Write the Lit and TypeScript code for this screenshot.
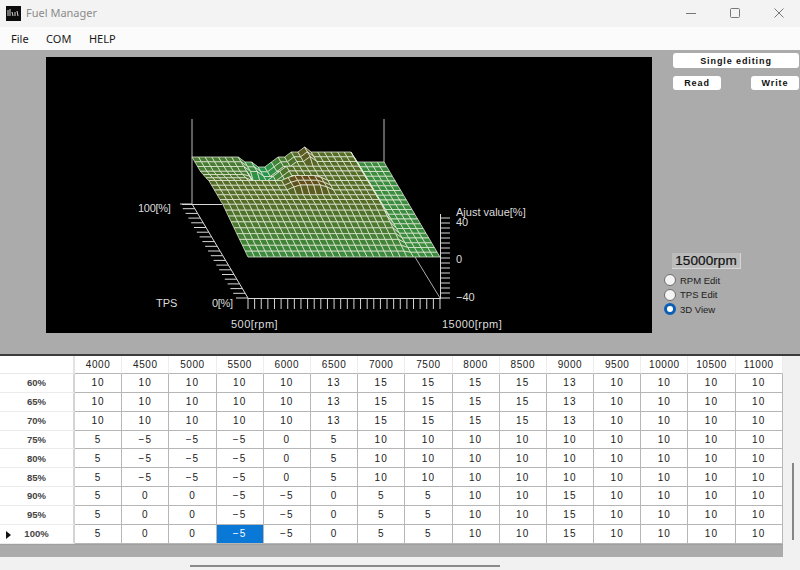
import { LitElement, html, css, svg } from "lit";
import { customElement } from "lit/decorators.js";

const RPMS = [4000, 4500, 5000, 5500, 6000, 6500, 7000, 7500, 8000, 8500, 9000, 9500, 10000, 10500, 11000];
const A = [10, 10, 10, 10, 10, 13, 15, 15, 15, 15, 13, 10, 10, 10, 10];
const B = [5, -5, -5, -5, 0, 5, 10, 10, 10, 10, 10, 10, 10, 10, 10];
const C = [5, 0, 0, -5, -5, 0, 5, 5, 10, 10, 15, 10, 10, 10, 10];
const ROWS: [string, number[]][] = [
  ["60%", A], ["65%", A], ["70%", A],
  ["75%", B], ["80%", B], ["85%", B],
  ["90%", C], ["95%", C], ["100%", C],
];

const NU = 29;
const NV = 20;

function height(i: number, j: number): number {
  // i: rpm index (500 rpm step), j: TPS index (5 % step)
  if (i >= 25) return 0;
  if (j <= 9) return j * 1.1;
  if (j <= 11) return 10;
  const row = j <= 14 ? A : j <= 17 ? B : C;
  if (i < 7) return j <= 14 ? 10 : 5 + (17 - Math.min(j, 17)) * 1.5;
  if (i > 21) return 10;
  return row[i - 7];
}

function px(i: number, j: number): [number, number] {
  const u = i / NU;
  const v = j / NV;
  return [248 - 56 * v + 192 * u, 257 - 95 * v - height(i, j)];
}

function mix(a: number[], b: number[], t: number) {
  return `rgb(${a.map((c, k) => Math.round(c + (b[k] - c) * t)).join(",")})`;
}

function colorFor(z: number): string {
  const low = [36, 150, 78];
  const zero = [58, 140, 62];
  const mid = [84, 108, 38];
  const high = [100, 76, 26];
  if (z < 0) return mix(zero, low, Math.min(1, -z / 5));
  if (z < 10) return mix(zero, mid, z / 10);
  return mix(mid, high, Math.min(1, (z - 10) / 5));
}

function range(n: number) {
  return Array.from({ length: n }, (_, k) => k);
}

@customElement("app-root")
export class AppRoot extends LitElement {
  static styles = css`
    :host {
      display: flex;
      flex-direction: column;
      width: 800px;
      height: 570px;
      overflow: hidden;
      background: #f1f1f1;
      font-family: "Liberation Sans", Arial, sans-serif;
    }
    .title {
      height: 27px;
      background: #f3f3f3;
      display: flex;
      align-items: center;
      padding-left: 6px;
      gap: 5px;
      font-family: "Noto Sans", sans-serif;
      font-size: 11px;
      color: #8b8b8b;
    }
    .logo { display: block; }
    .title .name { flex: 1; position: relative; top: -1px; }
    .ctl { display: block; }
    .ctls { display: flex; align-items: center; height: 27px; margin-right: -1px; }
    .ctlbox { width: 44px; display: flex; justify-content: center; position: relative; top: -1px; }
    .menu {
      height: 23px;
      background: #fbfbfb;
      display: flex;
      align-items: center;
      padding-left: 11px;
      gap: 17.5px;
      font-family: "Noto Sans", sans-serif;
      font-size: 11px;
      color: #1a1a1a;
    }
    .main {
      height: 304px;
      background: #ababab;
      border-bottom: 2px solid #3c3c3c;
      box-sizing: content-box;
      display: flex;
      align-items: flex-start;
    }
    .plot {
      display: block;
      margin: 7px 11px 0 46px;
      width: 606px;
      height: 276px;
      background: #000;
      flex: none;
    }
    .plot text {
      font-family: "Liberation Sans", Arial, sans-serif;
      font-size: 11px;
      fill: #dcdcdc;
    }
    .plot text.wide { letter-spacing: 0.45px; }
    .plot text.tight { letter-spacing: -0.3px; }
    .side {
      width: 137px;
      flex: none;
      display: flex;
      flex-direction: column;
      align-items: flex-start;
    }
    .btn {
      background: #fff;
      border-radius: 3px;
      font-weight: 700;
      font-size: 9px;
      letter-spacing: 0.9px;
      color: #111;
      display: flex;
      align-items: center;
      justify-content: center;
    }
    .single { width: 126px; height: 15px; margin: 3px 0 0 10px; }
    .btnrow { display: flex; justify-content: space-between; width: 126px; margin: 8px 0 0 10px; }
    .rw { width: 48px; height: 14px; }
    .rpm {
      margin: 163px 0 0 9px;
      width: 69px;
      height: 16px;
      background: #bcbcbc;
      border-right: 1px solid #d6d6d6;
      border-bottom: 1px solid #d6d6d6;
      box-sizing: border-box;
      font-size: 13.5px;
      letter-spacing: 0.1px;
      color: #111;
      text-align: center;
      line-height: 16px;
      -webkit-text-stroke: 0.2px #111;
    }
    .radios { display: flex; flex-direction: column; margin: 4px 0 0 1px; }
    .radio {
      height: 14.5px;
      display: flex;
      align-items: center;
      gap: 4px;
      font-size: 9.5px;
      color: #1c1c1c;
    }
    .dot {
      width: 12px;
      height: 12px;
      border-radius: 50%;
      background: #f4f4f4;
      border: 1px solid #6d6d6d;
      box-sizing: border-box;
    }
    .dot.on {
      border: 3.5px solid #0a5fb4;
      background: #fff;
    }
    .lower { flex: 1; display: flex; min-height: 0; }
    .gridwrap { width: 783px; flex: none; display: flex; flex-direction: column; }
    .grid {
      display: grid;
      grid-template-columns: 75px repeat(15, 47.2px);
      grid-template-rows: 18px repeat(9, 18.85px);
      background: #fff;
    }
    .cell {
      display: flex;
      align-items: center;
      justify-content: center;
      box-sizing: border-box;
      background: #fff;
      border-right: 1.5px solid #b6b6b6;
      border-bottom: 1.5px solid #b6b6b6;
      font-size: 10px;
      letter-spacing: 1.1px;
      color: #222;
    }
    .cell.sel { background: #0a78d7; color: #fff; }
    .hd {
      display: flex;
      align-items: center;
      justify-content: center;
      box-sizing: border-box;
      background: #fff;
      border-right: 1px solid #ededed;
      border-bottom: 1.5px solid #b6b6b6;
      font-size: 10px;
      letter-spacing: 0.55px;
      color: #222;
    }
    .hd.corner { border-right: 2px solid #e4e4e4; border-bottom: 1px solid #e8e8e8; }
    .rh {
      position: relative;
      display: flex;
      align-items: center;
      justify-content: center;
      box-sizing: border-box;
      background: #fff;
      border-right: 2px solid #d4d4d4;
      border-bottom: 1px solid #ececec;
      font-size: 9.5px;
      font-weight: 700;
      color: #444;
    }
    .arrow {
      position: absolute;
      left: 6px;
      top: 6px;
      width: 0;
      height: 0;
      border-left: 5px solid #111;
      border-top: 4.5px solid transparent;
      border-bottom: 4.5px solid transparent;
    }
    .greybar { height: 13px; background: #ababab; border-top: 1px solid #9f9f9f; box-sizing: border-box; }
    .hbarzone { flex: 1; padding: 8px 0 0 190px; box-sizing: border-box; }
    .hthumb { width: 310px; height: 2px; background: #8a8a8a; }
    .vzone { flex: 1; padding: 107px 0 0 9px; box-sizing: border-box; }
    .vthumb { width: 2px; height: 77px; background: #868686; }
  `;

  private surface() {
    const quads = [];
    for (let j = NV - 1; j >= 0; j--) {
      for (let i = 0; i < NU; i++) {
        const p = [px(i, j), px(i + 1, j), px(i + 1, j + 1), px(i, j + 1)];
        const z = (height(i, j) + height(i + 1, j) + height(i + 1, j + 1) + height(i, j + 1)) / 4;
        const d = "M" + p.map((q) => `${q[0].toFixed(1)} ${q[1].toFixed(1)}`).join("L") + "Z";
        quads.push(svg`<path d=${d} fill=${colorFor(z)} stroke="#e8eedc" stroke-width="0.75"></path>`);
      }
    }
    return quads;
  }

  private axes() {
    const g = "#d8d8d8";
    return svg`
      <line x1="192" y1="119" x2="192" y2="204" stroke="#bbb"></line>
      <line x1="384" y1="119" x2="384" y2="163" stroke="#bbb"></line>
      <line x1="182" y1="204.5" x2="222" y2="204.5" stroke=${g}></line>
      <line x1="192" y1="204" x2="248" y2="298" stroke=${g}></line>
      <line x1="248" y1="298.5" x2="440" y2="298.5" stroke=${g}></line>
      <line x1="440.5" y1="214" x2="440.5" y2="299" stroke=${g}></line>
      <line x1="415" y1="257" x2="440" y2="298" stroke="#aaa"></line>
      ${range(NV + 1).map((k) => {
        const y = 298 - (k * 94) / NV;
        const x = 248 - (k * 56) / NV;
        return svg`<line x1=${x - 12} y1=${y} x2=${x} y2=${y} stroke=${g} stroke-width="1"></line>`;
      })}
      ${range(NU + 1).map((k) => {
        const x = 248 + (k * 192) / NU;
        return svg`<line x1=${x} y1="298" x2=${x} y2="309" stroke=${g} stroke-width="1"></line>`;
      })}
      ${range(17).map((k) => {
        const y = 298 - k * 5;
        return svg`<line x1="440" y1=${y} x2="450" y2=${y} stroke=${g} stroke-width="1"></line>`;
      })}
      <text class="tight" x="138" y="212">100[%]</text>
      <text x="156" y="307">TPS</text>
      <text class="tight" x="212" y="307">0[%]</text>
      <text class="wide" x="231" y="328">500[rpm]</text>
      <text class="wide" x="442" y="328">15000[rpm]</text>
      <text x="456" y="216">Ajust value[%]</text>
      <text x="456" y="226">40</text>
      <text x="456" y="263">0</text>
      <text x="456" y="301">−40</text>
    `;
  }

  render() {
    return html`
      <div class="title">
        <svg class="logo" width="15" height="15" viewBox="0 0 15 15">
          <rect width="15" height="15" fill="#0b0b0b"></rect>
          <path d="M2 4v6M4 3v7M6 6l1 4M9 6v4M11 5l1 5" stroke="#d5d5d5" stroke-width="1" fill="none"></path>
        </svg>
        <span class="name">Fuel Manager</span>
        <div class="ctls">
          <div class="ctlbox">
            <svg class="ctl" width="12" height="12" viewBox="0 0 12 12"><path d="M1 6.5h10" stroke="#777" fill="none"></path></svg>
          </div>
          <div class="ctlbox">
            <svg class="ctl" width="12" height="12" viewBox="0 0 12 12"><rect x="1.5" y="1.5" width="9" height="9" rx="1" stroke="#777" fill="none"></rect></svg>
          </div>
          <div class="ctlbox">
            <svg class="ctl" width="12" height="12" viewBox="0 0 12 12"><path d="M1.5 1.5l9 9M10.5 1.5l-9 9" stroke="#777" fill="none"></path></svg>
          </div>
        </div>
      </div>
      <div class="menu"><span>File</span><span>COM</span><span>HELP</span></div>
      <div class="main">
        <svg class="plot" viewBox="46 57 606 276">
          ${this.axes()}
          ${this.surface()}
        </svg>
        <div class="side">
          <div class="btn single">Single editing</div>
          <div class="btnrow"><div class="btn rw">Read</div><div class="btn rw">Write</div></div>
          <div class="rpm">15000rpm</div>
          <div class="radios">
            <div class="radio"><span class="dot"></span>RPM Edit</div>
            <div class="radio"><span class="dot"></span>TPS Edit</div>
            <div class="radio"><span class="dot on"></span>3D View</div>
          </div>
        </div>
      </div>
      <div class="lower">
        <div class="gridwrap">
          <div class="grid">
            <div class="hd corner"></div>
            ${RPMS.map((r) => html`<div class="hd">${r}</div>`)}
            ${ROWS.map(
              ([label, vals], ri) => html`
                <div class="rh">${ri === 8 ? html`<span class="arrow"></span>` : ""}${label}</div>
                ${vals.map(
                  (v, ci) =>
                    html`<div class="cell ${ri === 8 && ci === 3 ? "sel" : ""}">${String(v).replace("-", "−")}</div>`
                )}
              `
            )}
          </div>
          <div class="greybar"></div>
          <div class="hbarzone"><div class="hthumb"></div></div>
        </div>
        <div class="vzone"><div class="vthumb"></div></div>
      </div>
    `;
  }
}
